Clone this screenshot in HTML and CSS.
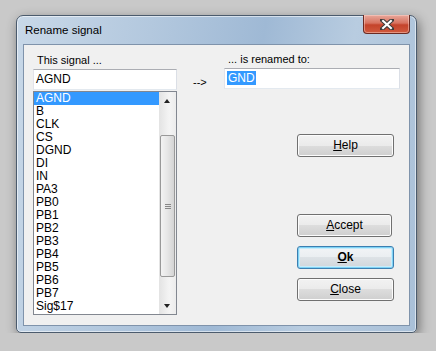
FILE: index.html
```html
<!DOCTYPE html>
<html lang="en">
<head>
    <meta charset="UTF-8">
    <title>Rename signal</title>
    <link rel="stylesheet" href="styles.css">
</head>
<body>
    <div class="window">
        <div class="titlebar">
            <span class="title">Rename signal</span>
            <span class="close-btn">
                <svg width="14" height="11" viewBox="0 0 14 11">
                    <path d="M2 1 L12 10 M12 1 L2 10" stroke="#3b3b3b" stroke-width="4.2" stroke-linecap="square"/>
                    <path d="M2.3 1.3 L11.7 9.7 M11.7 1.3 L2.3 9.7" stroke="#fff" stroke-width="2.2"/>
                </svg>
            </span>
        </div>
        <div class="client">
            <div class="col-left">
                <div class="label">This signal ...</div>
                <div class="textbox">AGND</div>
                <div class="listbox">
                    <ul class="items">
                        <li class="selected">AGND</li>
                        <li>B</li>
                        <li>CLK</li>
                        <li>CS</li>
                        <li>DGND</li>
                        <li>DI</li>
                        <li>IN</li>
                        <li>PA3</li>
                        <li>PB0</li>
                        <li>PB1</li>
                        <li>PB2</li>
                        <li>PB3</li>
                        <li>PB4</li>
                        <li>PB5</li>
                        <li>PB6</li>
                        <li>PB7</li>
                        <li>Sig$17</li>
                    </ul>
                    <div class="scrollbar">
                        <div class="sb-arrow up"></div>
                        <div class="sb-track top"></div>
                        <div class="sb-thumb"><span class="grip"></span></div>
                        <div class="sb-track bottom"></div>
                        <div class="sb-arrow down"></div>
                    </div>
                </div>
            </div>
            <div class="col-arrow">--&gt;</div>
            <div class="col-right">
                <div class="label">... is renamed to:</div>
                <div class="textbox"><span class="sel">GND</span></div>
                <div class="buttons">
                    <div class="btn help"><u>H</u>elp</div>
                    <div class="btn accept"><u>A</u>ccept</div>
                    <div class="btn default"><b><u>O</u>k</b></div>
                    <div class="btn"><u>C</u>lose</div>
                </div>
            </div>
        </div>
    </div>
</body>
</html>
```

FILE: styles.css
```css
body {
    margin: 0;
    padding: 15px 0 0 16px;
    background: #c9c9c9;
    font-family: "Liberation Sans", Arial, sans-serif;
    font-size: 11px;
    color: #000;
}
.window {
    box-sizing: border-box;
    width: 401px;
    height: 318px;
    border: 1px solid #4b5b6d;
    border-radius: 7px 7px 5px 5px;
    background: linear-gradient(100deg, #c8d8e8 0%, #b3c8de 30%, #9fb9d5 55%, #b8cce0 75%, #a9c0d8 100%);
    padding: 0 6px 6px 6px;
    display: flex;
    flex-direction: column;
    box-shadow: 2px 4px 12px rgba(0, 0, 0, 0.45), inset 0 0 0 1px rgba(255, 255, 255, 0.55);
}
.titlebar {
    height: 28px;
    display: flex;
    justify-content: space-between;
    align-items: flex-start;
}
.title {
    font-size: 11.5px;
    padding: 8px 0 0 2px;
    color: #000;
}
.close-btn {
    width: 47px;
    height: 19px;
    margin-top: -1px;
    box-sizing: border-box;
    border: 1px solid #6b2a22;
    border-top: none;
    border-radius: 0 0 4px 4px;
    background: linear-gradient(#e8a89c 0%, #d7725f 45%, #c4432b 55%, #d05a3e 100%);
    display: flex;
    align-items: center;
    justify-content: center;
    box-shadow: inset 0 0 0 1px rgba(255, 220, 210, 0.45);
}
.client {
    flex: 1;
    border: 1px solid #7f93ab;
    background: #f0f0f0;
    display: flex;
    padding-left: 9px;
}
.label {
    line-height: 13px;
    height: 13px;
    margin-bottom: 2px;
    padding-left: 4px;
}
.textbox {
    box-sizing: border-box;
    height: 21px;
    background: #fff;
    border: 1px solid #abadb3;
    border-color: #abadb3 #dbdfe6 #e3e9ef #e2e3ea;
    padding: 3px 0 0 2px;
    line-height: 13px;
    font-size: 12px;
}
.sel {
    background: #3399ff;
    color: #fff;
    padding: 0 1px;
}
.col-left {
    width: 144px;
    padding-top: 9px;
}
.col-arrow {
    width: 31px;
    padding: 31px 0 0 16px;
    line-height: 13px;
}
.col-right {
    width: 176px;
    padding-top: 8px;
}
.listbox {
    box-sizing: border-box;
    height: 224px;
    margin-top: 1px;
    border: 1px solid #828790;
    background: #fff;
    display: flex;
}
.items {
    list-style: none;
    margin: 0;
    padding: 0;
    width: 125px;
    font-size: 12px;
}
.items li {
    height: 13px;
    line-height: 13px;
    padding-left: 2px;
}
.items li.selected {
    background: #3399ff;
    color: #fff;
}
.scrollbar {
    width: 17px;
    display: flex;
    flex-direction: column;
    background: linear-gradient(90deg, #e3e3e3, #f4f4f4 60%, #ececec);
}
.sb-arrow {
    height: 17px;
    position: relative;
}
.sb-arrow::after {
    content: "";
    position: absolute;
    left: 5px;
    border-left: 3.5px solid transparent;
    border-right: 3.5px solid transparent;
}
.sb-arrow.up::after {
    top: 7px;
    border-bottom: 4px solid #222;
}
.sb-arrow.down::after {
    top: 7px;
    border-top: 4px solid #222;
}
.sb-track.top {
    height: 26px;
}
.sb-track.bottom {
    flex: 1;
}
.sb-thumb {
    box-sizing: border-box;
    height: 142px;
    margin: 0 1px;
    border: 1px solid #999;
    border-radius: 2px;
    background: linear-gradient(90deg, #f3f3f3, #e6e6e6 50%, #d4d4d4);
    display: flex;
    align-items: center;
    justify-content: center;
}
.grip {
    width: 6px;
    height: 5px;
    border-top: 1px solid #888;
    border-bottom: 1px solid #888;
    box-sizing: border-box;
    position: relative;
}
.grip::after {
    content: "";
    position: absolute;
    left: 0;
    right: 0;
    top: 1px;
    border-top: 1px solid #888;
}
.buttons {
    padding-left: 73px;
    padding-top: 45px;
}
.btn {
    box-sizing: border-box;
    width: 97px;
    height: 23px;
    border: 1px solid #707070;
    border-radius: 3px;
    background: linear-gradient(#f2f2f2 0%, #ebebeb 50%, #dddddd 50%, #cfcfcf 100%);
    box-shadow: inset 0 0 0 1px #fcfcfc;
    text-align: center;
    line-height: 21px;
    font-size: 12px;
    margin-bottom: 9px;
}
.btn.help {
    margin-bottom: 57px;
}
.btn.accept {
    width: 95px;
}
.btn.default {
    border-color: #3c7fb1;
    box-shadow: inset 0 0 0 1px #7fd3f5, inset 0 0 0 2px #c8ecfb;
    background: linear-gradient(#f2f4f6 0%, #eaeef1 50%, #dde2e6 50%, #d0d6db 100%);
}
```
